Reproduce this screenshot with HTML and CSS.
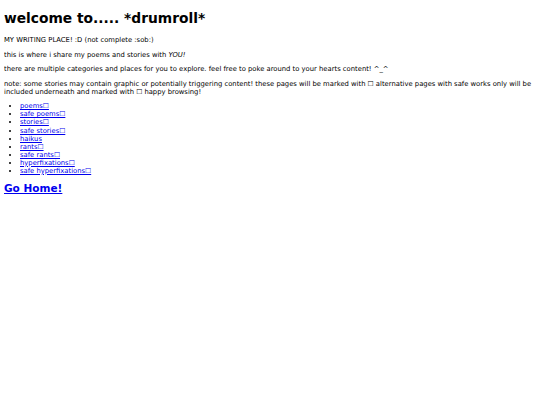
FILE: index.html
```html
<!DOCTYPE html>
<html>
<head>
<meta charset="utf-8">
<link rel="stylesheet" href="styles.css">
</head>
<body>
<h1 class="title">welcome to..... *drumroll*</h1>
<p class="text">MY WRITING PLACE! :D (not complete :sob:)</p>
<p class="text">this is where i share my poems and stories with <em>YOU!</em></p>
<p class="text">there are multiple categories and places for you to explore. feel free to poke around to your hearts content! ^_^</p>
<p class="text">note: some stories may contain graphic or potentially triggering content! these pages will be marked with &#9744; alternative pages with safe works only will be included underneath and marked with &#9744; happy browsing!</p>
<ul class="list">
<li><a href="#">poems&#9744;</a></li>
<li><a href="#">safe poems&#9744;</a></li>
<li><a href="#">stories&#9744;</a></li>
<li><a href="#">safe stories&#9744;</a></li>
<li><a href="#">haikus</a></li>
<li><a href="#">rants&#9744;</a></li>
<li><a href="#">safe rants&#9744;</a></li>
<li><a href="#">hyperfixations&#9744;</a></li>
<li><a href="#">safe hyperfixations&#9744;</a></li>
</ul>
<h2 class="home"><a href="#">Go Home!</a></h2>
</body>
</html>
```
FILE: styles.css
```css
body {
  margin: 4px;
  font-family: "DejaVu Sans", Verdana, sans-serif;
  font-size: 6.8px;
  color: #000;
  background: #fff;
}
.title {
  font-size: 13.8px;
  margin: 6px 0 10px;
}
.text {
  margin: 6.6px 0;
  line-height: 8px;
}
.list {
  margin: 6.6px 0 6px;
  padding-left: 16px;
  line-height: 8.05px;
}
.list a, .home a {
  color: #0000ee;
}
.home {
  font-size: 10.5px;
  margin: 7.5px 0;
}
```
